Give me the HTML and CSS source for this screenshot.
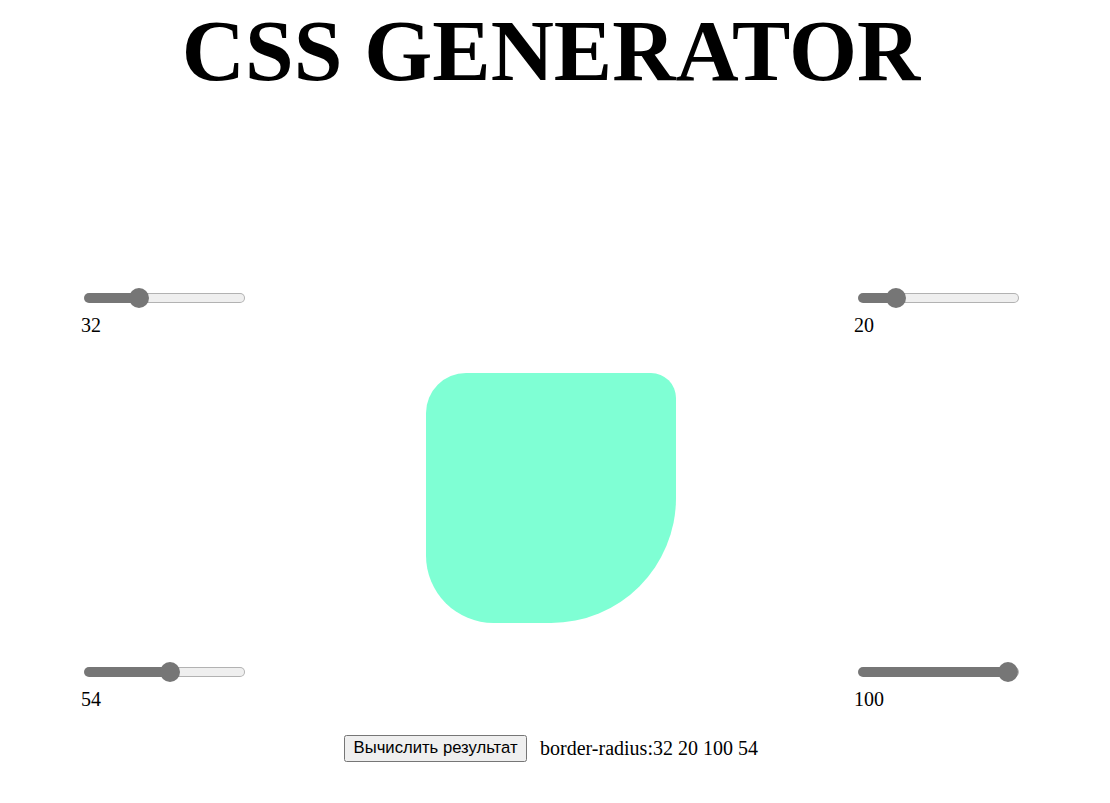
FILE: index.html
```html
<!DOCTYPE html>
<html lang="ru">
<head>
<meta charset="utf-8">
<title>CSS GENERATOR</title>
<link rel="stylesheet" href="styles.css">
</head>
<body>
<div class="page">
  <h1 class="title">CSS GENERATOR</h1>
  <div class="editor">
    <div class="side">
      <div class="control">
        <input class="range" type="range" min="0" max="100" value="32" style="--v: 0.32">
        <span class="value">32</span>
      </div>
      <div class="control">
        <input class="range" type="range" min="0" max="100" value="54" style="--v: 0.54">
        <span class="value">54</span>
      </div>
    </div>
    <div class="shape"></div>
    <div class="side side-right">
      <div class="control">
        <input class="range" type="range" min="0" max="100" value="20" style="--v: 0.2">
        <span class="value">20</span>
      </div>
      <div class="control">
        <input class="range" type="range" min="0" max="100" value="100" style="--v: 1">
        <span class="value">100</span>
      </div>
    </div>
  </div>
  <div class="result">
    <button class="calc" type="button">Вычислить результат</button>
    <span class="output">border-radius:32 20 100 54</span>
  </div>
</div>
</body>
</html>
```
FILE: styles.css
```css
html, body {
  margin: 0;
  padding: 0;
  background: #fff;
}
body {
  font-family: "Liberation Serif", "Times New Roman", serif;
  font-size: 20px;
  color: #000;
}
.page {
  width: 1102px;
}
.title {
  margin: 0;
  text-align: center;
  font-size: 87.5px;
  font-weight: bold;
}
.editor {
  display: flex;
  align-items: center;
  gap: 179px;
  padding-left: 81px;
  margin-top: 184px;
}
.side {
  height: 426px;
  display: flex;
  flex-direction: column;
  justify-content: space-between;
}
.side-right {
  margin-left: -1px;
}
.control {
  display: flex;
  flex-direction: column;
  align-items: flex-start;
}
.range {
  -webkit-appearance: none;
  appearance: none;
  width: 161px;
  height: 20px;
  margin: 2.5px;
  padding: 0;
  background: transparent;
  --pos: calc(10px + 141px * var(--v));
}
.side-right .range {
  margin-left: 3.5px;
}
.range::-webkit-slider-runnable-track {
  box-sizing: border-box;
  height: 10px;
  border-radius: 5px;
  border: 1px solid transparent;
  background:
    linear-gradient(to right, #767676 var(--pos), #efefef var(--pos)) padding-box,
    linear-gradient(to right, #767676 var(--pos), #b2b2b2 var(--pos)) border-box;
}
.range::-webkit-slider-thumb {
  -webkit-appearance: none;
  appearance: none;
  width: 20px;
  height: 20px;
  margin-top: -6px;
  border: none;
  border-radius: 50%;
  background: #767676;
}
.value {
  margin-top: 4px;
  line-height: 23px;
}
.shape {
  width: 250px;
  height: 250px;
  background: aquamarine;
  border-radius: 16% 10% 50% 27%;
}
.result {
  display: flex;
  justify-content: center;
  align-items: center;
  gap: 13px;
  margin-top: 24px;
}
.calc {
  zoom: 1.25;
  margin: 0;
}
```
